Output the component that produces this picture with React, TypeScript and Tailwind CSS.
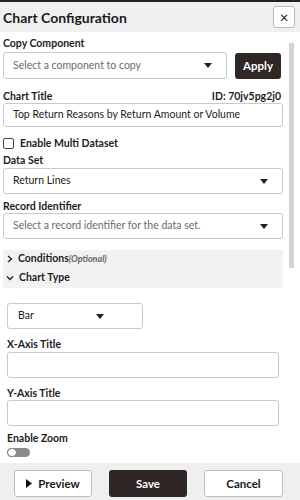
import React from 'react';

const Caret: React.FC = () => (
  <svg width="8" height="5" viewBox="0 0 8 5" className="shrink-0">
    <path d="M0 0 L8 0 L4 5 Z" fill="#222" />
  </svg>
);

const Label: React.FC<{ children: React.ReactNode; className?: string }> = ({ children, className = '' }) => (
  <div className={`text-[10.5px] font-bold text-[#1d1d1d] leading-[14px] ${className}`}>{children}</div>
);

const Select: React.FC<{ text: string; placeholder?: boolean; className?: string }> = ({ text, placeholder, className = '' }) => (
  <div className={`flex items-center justify-between h-[26px] border border-[#c9c9c9] rounded-[3px] bg-white pl-[9px] pr-[14px] ${className}`}>
    <span className={`text-[10.5px] ${placeholder ? 'text-[#6b6b6b]' : 'text-[#222]'}`}>{text}</span>
    <Caret />
  </div>
);

const App: React.FC = () => {
  return (
    <div className="w-[300px] h-[500px] bg-white flex flex-col overflow-hidden" style={{ fontFamily: 'Lato, "Noto Sans", sans-serif' }}>
      {/* header */}
      <div className="h-[32px] shrink-0 border-t-2 border-[#222] bg-[#f0f0f2] flex items-center justify-between pl-[3px] pr-[5px]">
        <h1 className="text-[14px] font-bold text-[#1a1a1a]">Chart Configuration</h1>
        <button className="w-[22px] h-[22px] border border-[#b9b9b9] rounded-[3px] bg-white flex items-center justify-center text-[15px] leading-none text-[#222]">
          ×
        </button>
      </div>

      {/* body */}
      <div className="flex-1 flex min-h-0">
        <div className="w-[283px] pl-[3px] pt-[4px] flex flex-col">
          <Label>Copy Component</Label>
          <div className="flex items-center mt-[2px]">
            <Select text="Select a component to copy" placeholder className="w-[224px] h-[27px]" />
            <button className="ml-[8px] w-[46px] h-[26px] bg-[#2e2725] rounded-[3px] text-white text-[11.5px] font-bold">Apply</button>
          </div>

          <div className="flex justify-between items-center mt-[10px] pr-[2px]">
            <Label>Chart Title</Label>
            <span className="text-[10.5px] font-bold text-[#1d1d1d] leading-[14px]">ID: 70jv5pg2j0</span>
          </div>
          <div className="h-[24px] border border-[#c9c9c9] rounded-[3px] flex items-center pl-[9px]">
            <span className="text-[10.5px] text-[#222]">Top Return Reasons by Return Amount or Volume</span>
          </div>

          <div className="flex items-center mt-[9px] gap-[6px]">
            <span className="w-[11px] h-[11px] border border-[#444] rounded-[2px] bg-white" />
            <Label>Enable Multi Dataset</Label>
          </div>

          <Label className="mt-[3px]">Data Set</Label>
          <Select text="Return Lines" className="mt-[1px] h-[26px]" />

          <Label className="mt-[5px]">Record Identifier</Label>
          <Select text="Select a record identifier for the data set." placeholder className="h-[26px]" />

          <div className="mt-[11px] h-[17px] bg-[#f2f2f5] flex items-center pl-[4px] gap-[5px]">
            <svg width="6" height="8" viewBox="0 0 6 8">
              <path d="M1 1 L4.5 4 L1 7" stroke="#222" strokeWidth="1.4" fill="none" />
            </svg>
            <span className="text-[10.5px] font-bold text-[#1d1d1d]">
              Conditions<span className="italic text-[9px] text-[#666]">(Optional)</span>
            </span>
          </div>
          <div className="h-px bg-[#faf7ee]" />
          <div className="h-[20px] bg-[#f2f2f5] flex items-center pl-[3px] gap-[5px]">
            <svg width="8" height="6" viewBox="0 0 8 6">
              <path d="M1 1.5 L4 4.5 L7 1.5" stroke="#222" strokeWidth="1.4" fill="none" />
            </svg>
            <span className="text-[10.5px] font-bold text-[#1d1d1d]">Chart Type</span>
          </div>

          <div className="pl-[4px] pr-[4px] flex flex-col">
            <Select text="Bar" className="mt-[15px] w-[136px] h-[26px] pl-[10px] pr-[38px]" />

            <Label className="mt-[8px]">X-Axis Title</Label>
            <div className="mt-[1px] h-[26px] border border-[#c9c9c9] rounded-[3px]" />

            <Label className="mt-[8px]">Y-Axis Title</Label>
            <div className="h-[26px] border border-[#c9c9c9] rounded-[3px]" />

            <Label className="mt-[5px]">Enable Zoom</Label>
            <div className="mt-[3px] w-[23px] h-[9px] rounded-full bg-[#8a8a8a] relative">
              <span className="absolute left-0 top-0 w-[10px] h-[9px] rounded-full bg-white border border-[#777]" />
            </div>
          </div>
        </div>
        <div className="flex-1 flex justify-center pt-[6px]">
          <div className="w-[5px] h-[225px] bg-[#d4d4d4] mt-[5px]" />
        </div>
      </div>

      {/* footer */}
      <div className="h-[37px] shrink-0 bg-[#efefef] flex items-start pt-[7px] pl-[14px] gap-[17px]">
        <button className="w-[78px] h-[27px] bg-white border border-[#bdbdbd] rounded-[3px] flex items-center justify-center gap-[6px] text-[11.5px] font-bold text-[#1a1a1a]">
          <svg width="6" height="9" viewBox="0 0 6 9">
            <path d="M0 0 L6 4.5 L0 9 Z" fill="#111" />
          </svg>
          Preview
        </button>
        <button className="w-[78px] h-[27px] bg-[#2e2725] rounded-[3px] text-white text-[11.5px] font-bold">Save</button>
        <button className="w-[79px] h-[27px] bg-white border border-[#bdbdbd] rounded-[3px] text-[11.5px] font-bold text-[#1a1a1a]">Cancel</button>
      </div>
    </div>
  );
};

export default App;
